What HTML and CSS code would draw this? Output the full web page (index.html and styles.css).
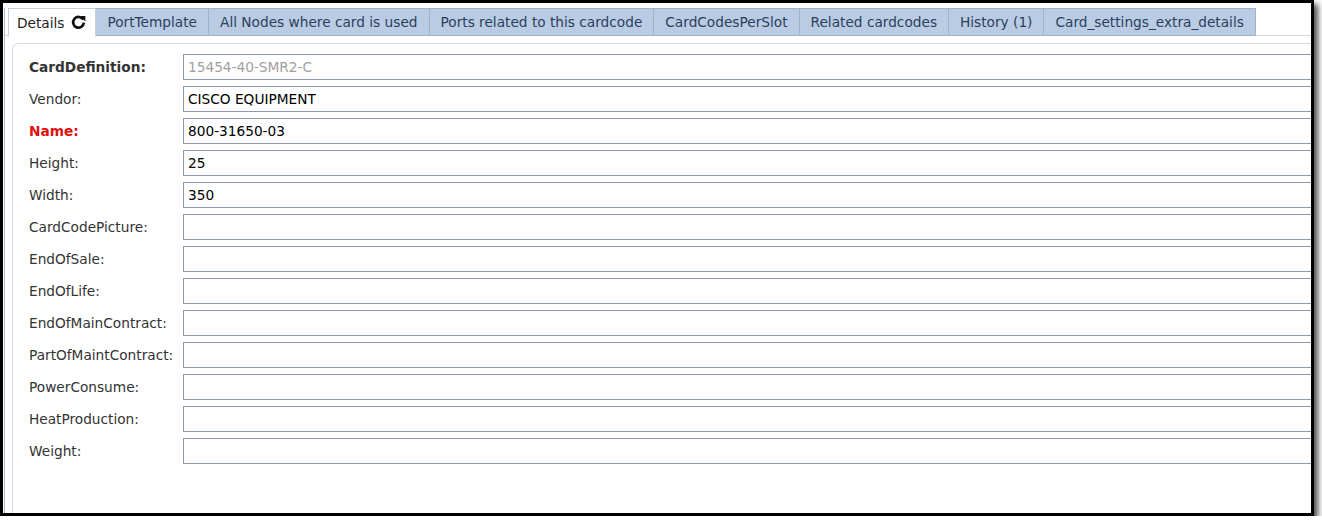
FILE: index.html
```html
<!DOCTYPE html>
<html>
<head>
<meta charset="utf-8">
<link rel="stylesheet" href="styles.css">
</head>
<body>
<div class="window">
  <div class="panel">
    <ul class="tabs">
      <li class="tab active">Details
        <svg class="refresh" width="15" height="15" viewBox="0 0 14 14"><path d="M11.4 4.4 A5 5 0 1 0 12 7.2" fill="none" stroke="#111" stroke-width="2.5"/><path d="M8.4 1 L13.4 1 L13.4 6 Z" fill="#111"/></svg>
      </li>
      <li class="tab">PortTemplate</li>
      <li class="tab">All Nodes where card is used</li>
      <li class="tab">Ports related to this cardcode</li>
      <li class="tab">CardCodesPerSlot</li>
      <li class="tab">Related cardcodes</li>
      <li class="tab">History (1)</li>
      <li class="tab">Card_settings_extra_details</li>
    </ul>
    <div class="box">
      <div class="row"><label class="lbl bold">CardDefinition:</label><div class="field disabled">15454-40-SMR2-C</div></div>
      <div class="row"><label class="lbl">Vendor:</label><div class="field">CISCO EQUIPMENT</div></div>
      <div class="row"><label class="lbl bold red">Name:</label><div class="field">800-31650-03</div></div>
      <div class="row"><label class="lbl">Height:</label><div class="field">25</div></div>
      <div class="row"><label class="lbl">Width:</label><div class="field">350</div></div>
      <div class="row"><label class="lbl">CardCodePicture:</label><div class="field"></div></div>
      <div class="row"><label class="lbl">EndOfSale:</label><div class="field"></div></div>
      <div class="row"><label class="lbl">EndOfLife:</label><div class="field"></div></div>
      <div class="row"><label class="lbl">EndOfMainContract:</label><div class="field"></div></div>
      <div class="row"><label class="lbl">PartOfMaintContract:</label><div class="field"></div></div>
      <div class="row"><label class="lbl">PowerConsume:</label><div class="field"></div></div>
      <div class="row"><label class="lbl">HeatProduction:</label><div class="field"></div></div>
      <div class="row"><label class="lbl">Weight:</label><div class="field"></div></div>
    </div>
  </div>
</div>
</body>
</html>
```
FILE: styles.css
```css
html, body {
  margin: 0;
  padding: 0;
  background: #ffffff;
}
body {
  font-family: "DejaVu Sans", Verdana, sans-serif;
  font-size: 13.7px;
  color: #333;
}
.window {
  width: 1308px;
  height: 510px;
  border: 3px solid #000;
  box-shadow: 4px 4px 6px rgba(0, 0, 0, 0.7);
  background: #fff;
  overflow: hidden;
  position: relative;
}
.panel {
  margin-left: 1px;
  margin-top: 8px;
  height: 520px;
  border-left: 1px solid #a9bbd3;
  width: 1600px;
}
.tabs {
  list-style: none;
  margin: 0;
  padding: 0 0 0 3px;
  margin-top: -3px;
  display: flex;
  height: 27px;
  border-bottom: 1px solid #d4d8dc;
}
.tab {
  display: flex;
  align-items: center;
  height: 26px;
  padding: 0 11px;
  background: #b9cce4;
  border: 1px solid #9cb2cd;
  border-left: none;
  color: #2c3f5b;
  white-space: nowrap;
}
.tab.active {
  background: #fff;
  color: #222;
  border: 1px solid #c9cfd6;
  border-bottom-color: #fff;
  height: 27px;
  padding: 0 9px 0 8px;
}
.refresh {
  margin-left: 7px;
}
.box {
  margin: 7px 0 0 7px;
  border: 1px solid #d6d9dc;
  border-radius: 6px;
  padding: 10px 0 0 16px;
  display: flex;
  flex-direction: column;
  gap: 6px;
  height: 480px;
}
.row {
  display: flex;
  align-items: center;
  height: 26px;
}
.lbl {
  width: 154px;
  flex: none;
  color: #333;
}
.bold {
  font-weight: bold;
}
.red {
  color: #e0100e;
}
.field {
  width: 1300px;
  height: 24px;
  line-height: 24px;
  border: 1px solid #8e9aa6;
  padding: 0 4px;
  color: #000;
  box-sizing: content-box;
}
.field.disabled {
  color: #a0a0a0;
}
```
